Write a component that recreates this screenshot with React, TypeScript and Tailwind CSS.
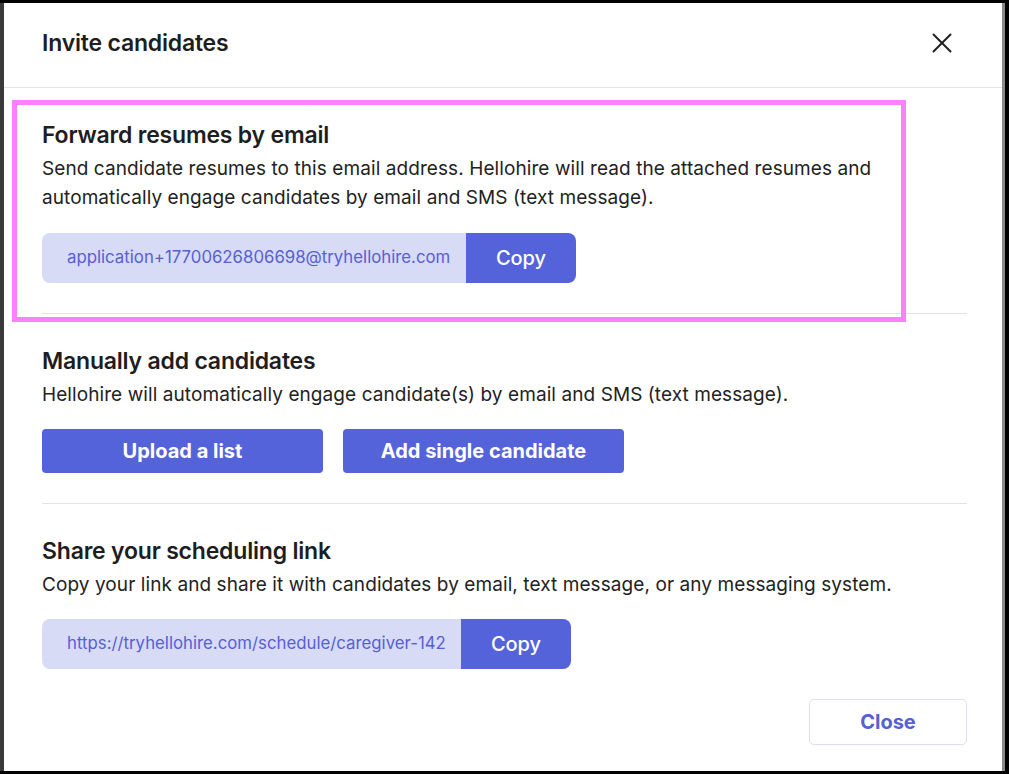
import { X } from "lucide-react";

const CopyField = ({ value, width }: { value: string; width: string }) => {
  return (
    <div className={`flex h-[50px] ${width} rounded-[8px] overflow-hidden`}>
      <div className="flex-1 flex items-center bg-[#d8dbf6] pl-[25px] text-[16.8px] text-[#5560d4] whitespace-nowrap">
        {value}
      </div>
      <button className="w-[110px] bg-[#5563db] text-white text-[20px] font-medium">
        Copy
      </button>
    </div>
  );
};

const Section = ({
  title,
  text,
  gap = "mt-[21px]",
  children,
}: {
  title: string;
  text: React.ReactNode;
  gap?: string;
  children: React.ReactNode;
}) => {
  return (
    <section className="pt-[33px] pb-[30px]">
      <h2 className="text-[23px] leading-[28px] font-semibold text-[#1e1e1e] tracking-[-0.2px]">
        {title}
      </h2>
      <p className="mt-[5px] text-[19px] leading-[29px] text-[#222] tracking-[0.08px]">{text}</p>
      <div className={gap}>{children}</div>
    </section>
  );
};

const App = () => {
  return (
    <main
      className="w-[1009px] h-[774px] bg-black pt-[3px] pr-[4px] pb-[3px] overflow-hidden"
      style={{ fontFamily: "Inter, 'Noto Sans', sans-serif" }}
    >
      <div className="flex h-full">
        <div className="w-[4px] bg-[#3a3a3a]" />
        <div className="relative flex-1 h-full bg-white border-r-[3px] border-[#8a8a8a] flex flex-col">
          <header className="h-[85px] flex items-center justify-between pl-[38px] pr-[43px] border-b border-[#e2e2ea] pb-[4px]">
            <h1 className="text-[23px] font-semibold text-[#1e1e1e] tracking-[-0.2px]">
              Invite candidates
            </h1>
            <X size={34} strokeWidth={1.4} className="text-[#222]" />
          </header>

          <div className="pl-[38px] pr-[35px] flex flex-col">
            <div className="border-b border-[#e2e2ea]">
              <Section
                title="Forward resumes by email"
                text={
                  <>
                    Send candidate resumes to this email address. Hellohire will read the attached resumes and
                    <br />
                    automatically engage candidates by email and SMS (text message).
                  </>
                }
              >
                <CopyField value="application+17700626806698@tryhellohire.com" width="w-[534px]" />
              </Section>
            </div>

            <div className="border-b border-[#e2e2ea]">
              <Section
                title="Manually add candidates"
                text="Hellohire will automatically engage candidate(s) by email and SMS (text message)."
                gap="mt-[20px]"
              >
                <div className="flex gap-[20px]">
                  <button className="w-[281px] h-[44px] rounded-[4px] bg-[#5563db] text-white text-[20px] font-bold">
                    Upload a list
                  </button>
                  <button className="w-[281px] h-[44px] rounded-[4px] bg-[#5563db] text-white text-[20px] font-bold">
                    Add single candidate
                  </button>
                </div>
              </Section>
            </div>

            <Section
              title="Share your scheduling link"
              text="Copy your link and share it with candidates by email, text message, or any messaging system."
              gap="mt-[20px]"
            >
              <CopyField value="https://tryhellohire.com/schedule/caregiver-142" width="w-[529px]" />
            </Section>

            <div className="flex justify-end">
              <button className="w-[158px] h-[46px] rounded-[5px] border border-[#dcdff3] text-[#5560d4] text-[20px] font-bold">
                Close
              </button>
            </div>
          </div>

          <div className="absolute left-[8px] top-[97px] w-[894px] h-[222px] border-[5px] border-[#ff80ff] pointer-events-none" />
        </div>
      </div>
    </main>
  );
};

export default App;
